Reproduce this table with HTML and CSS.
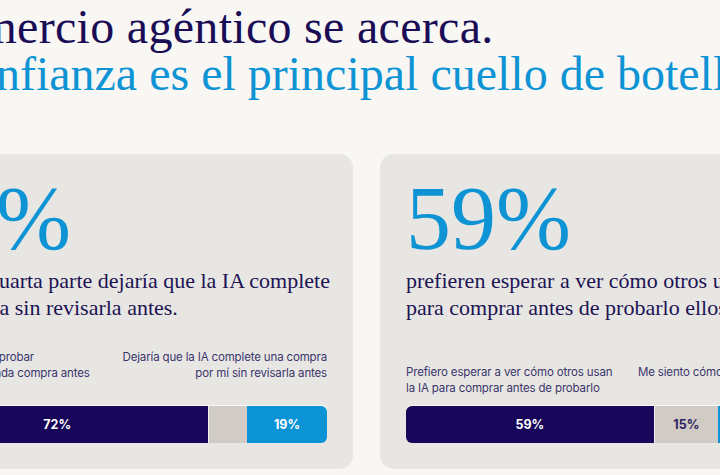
FILE: index.html
```html
<!DOCTYPE html>
<html lang="es">
<head>
<meta charset="utf-8">
<title>Comercio agéntico</title>
<link rel="stylesheet" href="styles.css">
</head>
<body>
<main class="page">
  <h1 class="title">
    <span class="title-line title-dark">El comercio agéntico se acerca.</span>
    <span class="title-line title-blue">La confianza es el principal cuello de botella.</span>
  </h1>
  <section class="cards">
    <article class="card">
      <div class="stat">20%</div>
      <p class="stat-text">Solo una cuarta parte dejaría que la IA complete una compra sin revisarla antes.</p>
      <div class="chart">
        <div class="labels labels-tall">
          <span class="label">Quiero revisar y aprobar<br>personalmente cada compra antes</span>
          <span class="label label-right">Dejaría que la IA complete una compra<br>por mí sin revisarla antes</span>
        </div>
        <div class="bar">
          <div class="seg seg-dark" style="width:72%">72%</div>
          <div class="seg seg-grey" style="width:9%"></div>
          <div class="seg seg-blue" style="width:19%">19%</div>
        </div>
      </div>
    </article>
    <article class="card">
      <div class="stat">59%</div>
      <p class="stat-text">prefieren esperar a ver cómo otros usan la IA para comprar antes de probarlo ellos mismos.</p>
      <div class="chart">
        <div class="labels">
          <span class="label">Prefiero esperar a ver cómo otros usan<br>la IA para comprar antes de probarlo</span>
          <span class="label label-right">Me siento cómodo usando la IA hoy</span>
        </div>
        <div class="bar">
          <div class="seg seg-dark" style="width:59%">59%</div>
          <div class="seg seg-grey" style="width:15%">15%</div>
          <div class="seg seg-blue" style="width:26%">26%</div>
        </div>
      </div>
    </article>
  </section>
</main>
</body>
</html>
```

FILE: styles.css
```css
html, body {
  margin: 0;
  padding: 0;
}

body {
  background: #f8f7f4;
  overflow: hidden;
  width: 720px;
  height: 475px;
}

.page {
  width: 973px;
  margin-left: -120px;
}

.title {
  margin: 3px 0 0 0;
  padding-left: 8px;
  font-family: "Liberation Serif", "Times New Roman", serif;
  font-weight: 400;
  font-size: 48px;
  line-height: 47px;
  white-space: nowrap;
}

.title-line {
  display: block;
}

.title-dark {
  color: #1a0d56;
  margin-left: -10px;
  letter-spacing: 0.3px;
}

.title-blue {
  color: #0e93d4;
}

.cards {
  display: grid;
  grid-template-columns: 473px 473px;
  column-gap: 27px;
  margin-top: 57px;
}

.card {
  box-sizing: border-box;
  height: 315px;
  background: #e8e6e3;
  border-radius: 14px;
  padding: 20px 26px 26px 26px;
  display: flex;
  flex-direction: column;
}

.stat {
  font-family: "Liberation Serif", "Times New Roman", serif;
  font-size: 90px;
  line-height: 90px;
  color: #0e93d4;
}

.stat-text {
  margin: 3px -4px 0 0;
  font-family: "Liberation Serif", "Times New Roman", serif;
  font-size: 22px;
  line-height: 27px;
  color: #1c1353;
}

.chart {
  margin-top: auto;
}

.labels {
  display: flex;
  justify-content: space-between;
  align-items: flex-start;
  margin-bottom: 10px;
  font-family: "Inter", "Liberation Sans", sans-serif;
  font-size: 11.5px;
  letter-spacing: -0.15px;
  line-height: 16px;
  color: #3a356c;
}

.labels-tall {
  margin-bottom: 25px;
}

.label-right {
  text-align: right;
}

.bar {
  display: flex;
  height: 37px;
  border-radius: 6px;
  overflow: hidden;
  box-shadow: 0 -1px 0 rgba(255, 255, 255, 0.7);
}

.seg {
  display: flex;
  align-items: center;
  justify-content: center;
  font-family: "Inter", "Liberation Sans", sans-serif;
  font-size: 12.5px;
  font-weight: 700;
}

.seg-dark {
  background: #170659;
  color: #ffffff;
  border-right: 1px solid #f2f0ee;
}

.seg-grey {
  background: #d0cbc5;
  color: #2b2360;
}

.seg-blue {
  background: #0b93d6;
  color: #ffffff;
}
```
